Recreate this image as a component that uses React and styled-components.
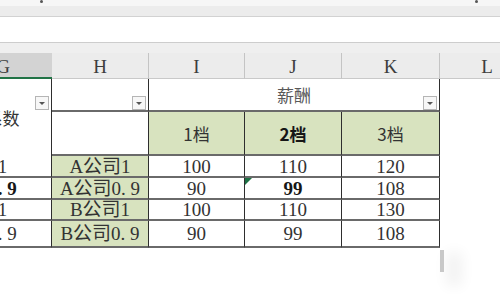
import React from 'react';
import styled, { createGlobalStyle } from 'styled-components';

const GlobalStyle = createGlobalStyle`
  html, body {
    margin: 0;
    padding: 0;
    background: #ffffff;
  }
  * {
    box-sizing: border-box;
  }
`;

const LINE_H = '2px solid #6a6a6a';
const LINE_V = '1px solid #2e2e2e';

const columns = ['G', 'H', 'I', 'J', 'K', 'L'];

const rows = [
  { g: '1', h: 'A公司1', i: '100', j: '110', k: '120' },
  { g: '0.9', h: 'A公司0.9', i: '90', j: '99', k: '108', bold: true, flag: true },
  { g: '1', h: 'B公司1', i: '100', j: '110', k: '130' },
  { g: '0.9', h: 'B公司0.9', i: '90', j: '99', k: '108' },
];

// Half-width period the way SimSun draws it
const withDots = (text) =>
  text.split(/(\.)/).map((part, i) =>
    part === '.' ? <Dot key={i}>.</Dot> : <React.Fragment key={i}>{part}</React.Fragment>
  );

const App = () => {
  return (
    <>
      <GlobalStyle />
      <Page>
        <TopStrip>
          <Speck />
          <Speck />
        </TopStrip>
        <Ribbon />
        <FormulaBar />
        <HeaderGap />
        <Viewport>
          <Sheet>
            {columns.map((col) => (
              <ColHeader key={col} $active={col === 'G'} $last={col === 'L'}>
                {col}
              </ColHeader>
            ))}

            <Cell $col="1" $row="2 / span 2" $right>
              系数
              <FilterButton $top={17} />
            </Cell>
            <Cell $col="2" $row="2" $right $bottom>
              <FilterButton $top={17} />
            </Cell>
            <Cell $col="2" $row="3" $right $bottom />
            <Cell $col="3 / span 3" $row="2" $right $bottom $light>
              薪酬
              <FilterButton $top={17} />
            </Cell>
            <GreenCell $col="3" $row="3" $right $bottom>1档</GreenCell>
            <GreenCell $col="4" $row="3" $right $bottom $bold>2档</GreenCell>
            <GreenCell $col="5" $row="3" $right $bottom>3档</GreenCell>

            {rows.map((r, idx) => {
              const row = idx + 4;
              return (
                <React.Fragment key={idx}>
                  <Cell $col="1" $row={row} $right $bottom $num $bold={r.bold}>
                    {withDots(r.g)}
                  </Cell>
                  <GreenCell $col="2" $row={row} $right $bottom $num>
                    {withDots(r.h)}
                  </GreenCell>
                  <Cell $col="3" $row={row} $right $bottom $num>{r.i}</Cell>
                  <Cell $col="4" $row={row} $right $bottom $num $bold={r.bold}>
                    {r.flag && <ErrorFlag />}
                    {r.j}
                  </Cell>
                  <Cell $col="5" $row={row} $right $bottom $num>{r.k}</Cell>
                </React.Fragment>
              );
            })}
          </Sheet>
          <FillShadow />
        </Viewport>
      </Page>
    </>
  );
};

const Page = styled.div`
  width: 500px;
  height: 294px;
  overflow: hidden;
  background: #ffffff;
  display: flex;
  flex-direction: column;
`;

const TopStrip = styled.div`
  height: 6px;
  background: #f6f6f6;
  display: flex;
  justify-content: space-between;
  padding: 0 22px 0 40px;
`;

const Speck = styled.span`
  width: 3px;
  height: 3px;
  border-radius: 50%;
  background: #555;
`;

const Ribbon = styled.div`
  height: 11px;
  background: #ececec;
  border-bottom: 1px solid #d2d2d2;
`;

const FormulaBar = styled.div`
  height: 26px;
  background: #ffffff;
  border-bottom: 1px solid #cdcdcd;
`;

const HeaderGap = styled.div`
  height: 10px;
  background: #efefef;
`;

const Viewport = styled.div`
  position: relative;
  flex: 1;
  overflow: hidden;
`;

const Sheet = styled.div`
  display: grid;
  grid-template-columns: 98px 97px 96px 97px 98px 94px;
  grid-template-rows: 26px 33px 44px 22px 22px 21px 27px;
  margin-left: -46px;
  font-family: 'Liberation Serif', 'Noto Sans CJK SC', serif;
  color: #333;
`;

const ColHeader = styled.div`
  display: flex;
  align-items: center;
  justify-content: center;
  padding-top: 3px;
  font-family: 'Liberation Serif', serif;
  font-size: 19px;
  color: #3d3d3d;
  background: ${(p) => (p.$active ? '#d3d3d3' : '#ececec')};
  border-bottom: ${(p) => (p.$active ? '2px solid #217346' : '1px solid #c9c9c9')};
  border-right: ${(p) => (p.$last || p.$active ? 'none' : '1px solid #c4c4c4')};
`;

const Cell = styled.div`
  position: relative;
  grid-column: ${(p) => p.$col};
  grid-row: ${(p) => p.$row};
  display: flex;
  align-items: center;
  justify-content: center;
  border-right: ${(p) => (p.$right ? LINE_V : 'none')};
  border-bottom: ${(p) => (p.$bottom ? LINE_H : 'none')};
  font-family: ${(p) =>
    p.$num
      ? "'Liberation Serif', 'Noto Sans CJK SC', serif"
      : "'Noto Sans CJK SC', 'Liberation Sans', sans-serif"};
  font-size: ${(p) => (p.$num ? '19px' : '17px')};
  font-weight: ${(p) => (p.$bold ? 700 : 400)};
  color: ${(p) => (p.$light ? '#595959' : p.$bold ? '#161616' : '#333')};
  white-space: nowrap;
  line-height: 1;
`;

const GreenCell = styled(Cell)`
  background: #d8e3bf;
`;

const Dot = styled.span`
  display: inline-block;
  width: 0.5em;
  text-align: left;
`;

const FilterButton = styled.span`
  position: absolute;
  top: ${(p) => p.$top}px;
  right: 2px;
  width: 14px;
  height: 14px;
  background: #f7f7f7;
  border: 1px solid #b5b5b5;
  display: flex;
  align-items: center;
  justify-content: center;

  &::after {
    content: '';
    border-left: 3px solid transparent;
    border-right: 3px solid transparent;
    border-top: 3px solid #555;
  }
`;

const ErrorFlag = styled.span`
  position: absolute;
  top: 0;
  left: 0;
  width: 0;
  height: 0;
  border-top: 7px solid #1e7145;
  border-right: 7px solid transparent;
`;

const FillShadow = styled.span`
  position: absolute;
  left: 440px;
  top: 197px;
  width: 4px;
  height: 22px;
  background: #c8c8c8;
  box-shadow: 12px 8px 14px 6px #f2f2f2;
`;

export default App;
